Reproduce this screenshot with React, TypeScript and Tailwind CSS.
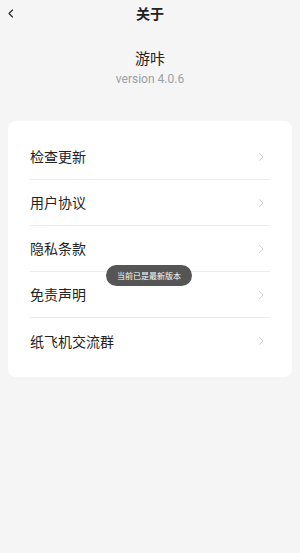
import React from 'react';

const items = ['检查更新', '用户协议', '隐私条款', '免责声明', '纸飞机交流群'];

function Chevron({ className }: { className?: string }) {
  return (
    <svg viewBox="0 0 24 24" className={className} fill="none" stroke="currentColor" strokeWidth={1.5} strokeLinecap="round" strokeLinejoin="round">
      <path d="M9 5l7 7-7 7" />
    </svg>
  );
}

export default function App() {
  return (
    <div
      className="relative h-[553px] w-[300px] overflow-hidden bg-[#f5f5f5] text-[#222]"
      style={{ fontFamily: '"Noto Sans CJK SC", "Noto Sans", sans-serif' }}
    >
      {/* Header */}
      <header className="relative flex h-[26px] items-center justify-center">
        <button className="absolute left-[5px] top-[5px] flex h-[16px] w-[12px] items-center justify-center text-[#222]">
          <svg viewBox="0 0 24 24" className="h-[15px] w-[15px]" fill="none" stroke="currentColor" strokeWidth={2.2} strokeLinecap="round" strokeLinejoin="round">
            <path d="M15 5l-7 7 7 7" />
          </svg>
        </button>
        <h1 className="text-[14px] font-bold leading-none">关于</h1>
      </header>

      {/* App info */}
      <div className="mt-[21px] flex flex-col items-center">
        <div className="text-[15px] leading-[22px] text-[#222]">游咔</div>
        <div className="mt-[2px] font-['Roboto',sans-serif] text-[12px] leading-[16px] text-[#9aa0a6]">version 4.0.6</div>
      </div>

      {/* Menu card */}
      <div className="mx-[8px] mt-[34px] rounded-[8px] bg-white pb-[13px] pt-[13px]">
        {items.map((label, i) => (
          <div key={label} className="px-[22px]">
            <div className={`flex h-[46px] items-center justify-between ${i < items.length - 1 ? 'border-b border-[#ececec]' : ''}`}>
              <span className="text-[14px] text-[#222]">{label}</span>
              <Chevron className="mr-[3px] h-[12px] w-[12px] text-[#c4c4c4]" />
            </div>
          </div>
        ))}
      </div>

      {/* Toast */}
      <div className="absolute left-[106px] top-[265px] flex h-[21px] w-[86px] items-center justify-center rounded-full bg-[#555555]">
        <span className="text-[8px] leading-none text-white">当前已是最新版本</span>
      </div>
    </div>
  );
}
